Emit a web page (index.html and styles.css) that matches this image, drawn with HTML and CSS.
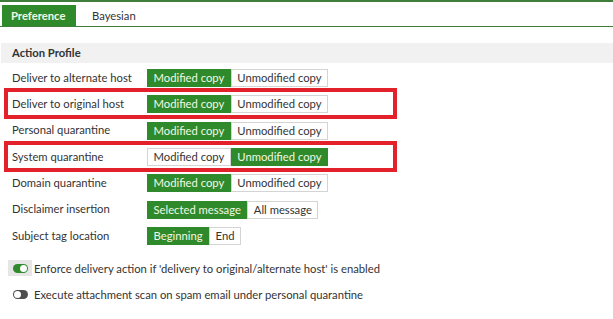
FILE: index.html
```
<!DOCTYPE html>
<html lang="en">
<head>
    <meta charset="UTF-8">
    <title>Antispam Profile</title>
    <link rel="stylesheet" href="styles.css">
</head>
<body>
    <div class="tabs">
        <div class="tab active">Preference</div>
        <div class="tab">Bayesian</div>
    </div>

    <div class="section-title">Action Profile</div>

    <div class="form-rows">
        <div class="form-row">
            <span class="label">Deliver to alternate host</span>
            <div class="btn-group">
                <span class="btn selected">Modified copy</span>
                <span class="btn">Unmodified copy</span>
            </div>
        </div>
        <div class="form-row marked">
            <span class="label">Deliver to original host</span>
            <div class="btn-group">
                <span class="btn selected">Modified copy</span>
                <span class="btn">Unmodified copy</span>
            </div>
        </div>
        <div class="form-row">
            <span class="label">Personal quarantine</span>
            <div class="btn-group">
                <span class="btn selected">Modified copy</span>
                <span class="btn">Unmodified copy</span>
            </div>
        </div>
        <div class="form-row marked">
            <span class="label">System quarantine</span>
            <div class="btn-group">
                <span class="btn">Modified copy</span>
                <span class="btn selected">Unmodified copy</span>
            </div>
        </div>
        <div class="form-row">
            <span class="label">Domain quarantine</span>
            <div class="btn-group">
                <span class="btn selected">Modified copy</span>
                <span class="btn">Unmodified copy</span>
            </div>
        </div>
        <div class="form-row">
            <span class="label">Disclaimer insertion</span>
            <div class="btn-group">
                <span class="btn selected">Selected message</span>
                <span class="btn">All message</span>
            </div>
        </div>
        <div class="form-row">
            <span class="label">Subject tag location</span>
            <div class="btn-group">
                <span class="btn selected">Beginning</span>
                <span class="btn">End</span>
            </div>
        </div>
    </div>

    <div class="toggles">
        <div class="toggle-row">
            <span class="toggle-wrap focused"><span class="toggle on"></span></span>
            <span>Enforce delivery action if 'delivery to original/alternate host' is enabled</span>
        </div>
        <div class="toggle-row">
            <span class="toggle-wrap"><span class="toggle"></span></span>
            <span>Execute attachment scan on spam email under personal quarantine</span>
        </div>
    </div>
</body>
</html>
```

FILE: styles.css
```
body {
    margin: 0;
    font-family: Lato, "Open Sans", sans-serif;
    font-size: 11.25px;
    color: #333;
    background: #fff;
    border-top: 2px solid #3e7e3a;
}
.tabs {
    display: flex;
    padding: 3px 0 0 2px;
    border-bottom: 1px solid #3e7e3a;
}
.tab {
    height: 21px;
    line-height: 21px;
    padding: 0 9px;
}
.tab.active {
    width: 56px;
    background: #2f8a2c;
    color: #f3f8e4;
    font-weight: bold;
}
.tab + .tab {
    margin-left: 7px;
}
.section-title {
    margin: 16px 0 0 1px;
    height: 20px;
    line-height: 20px;
    padding-left: 11px;
    background: #f1f1f1;
    font-weight: bold;
}
.form-rows {
    margin-top: 2px;
    padding-left: 12px;
}
.form-row {
    position: relative;
    display: flex;
    align-items: center;
    height: 26.33px;
}
.form-row.marked::after {
    content: "";
    position: absolute;
    left: -8px;
    top: -3px;
    width: 385px;
    height: 23px;
    border: 4px solid #e3212b;
}
.label {
    width: 135px;
    margin-top: -2px;
}
.btn-group {
    display: flex;
}
.btn {
    height: 16px;
    line-height: 16px;
    padding: 0 5.5px;
    border: 1px solid #d4d4d4;
    background: #fff;
    color: #333;
}
.btn.selected {
    background: #2f8a2c;
    border-color: #2f8a2c;
    color: #f3f8e4;
}
.toggles {
    margin-top: 6px;
}
.toggle-row {
    display: flex;
    align-items: center;
    height: 26px;
    padding-left: 8px;
}
.toggle-wrap {
    width: 24px;
    height: 16px;
    display: flex;
    align-items: center;
    justify-content: center;
    margin-right: 2px;
}
.toggle-wrap.focused {
    background: #e6e6e6;
}
.toggle {
    position: relative;
    width: 15px;
    height: 9px;
    border-radius: 5px;
    background: #4d4d4d;
}
.toggle::after {
    content: "";
    position: absolute;
    top: 1px;
    left: 1px;
    width: 7px;
    height: 7px;
    border-radius: 50%;
    background: #fff;
}
.toggle.on {
    background: #2f8a2c;
}
.toggle.on::after {
    left: 7px;
}
```
